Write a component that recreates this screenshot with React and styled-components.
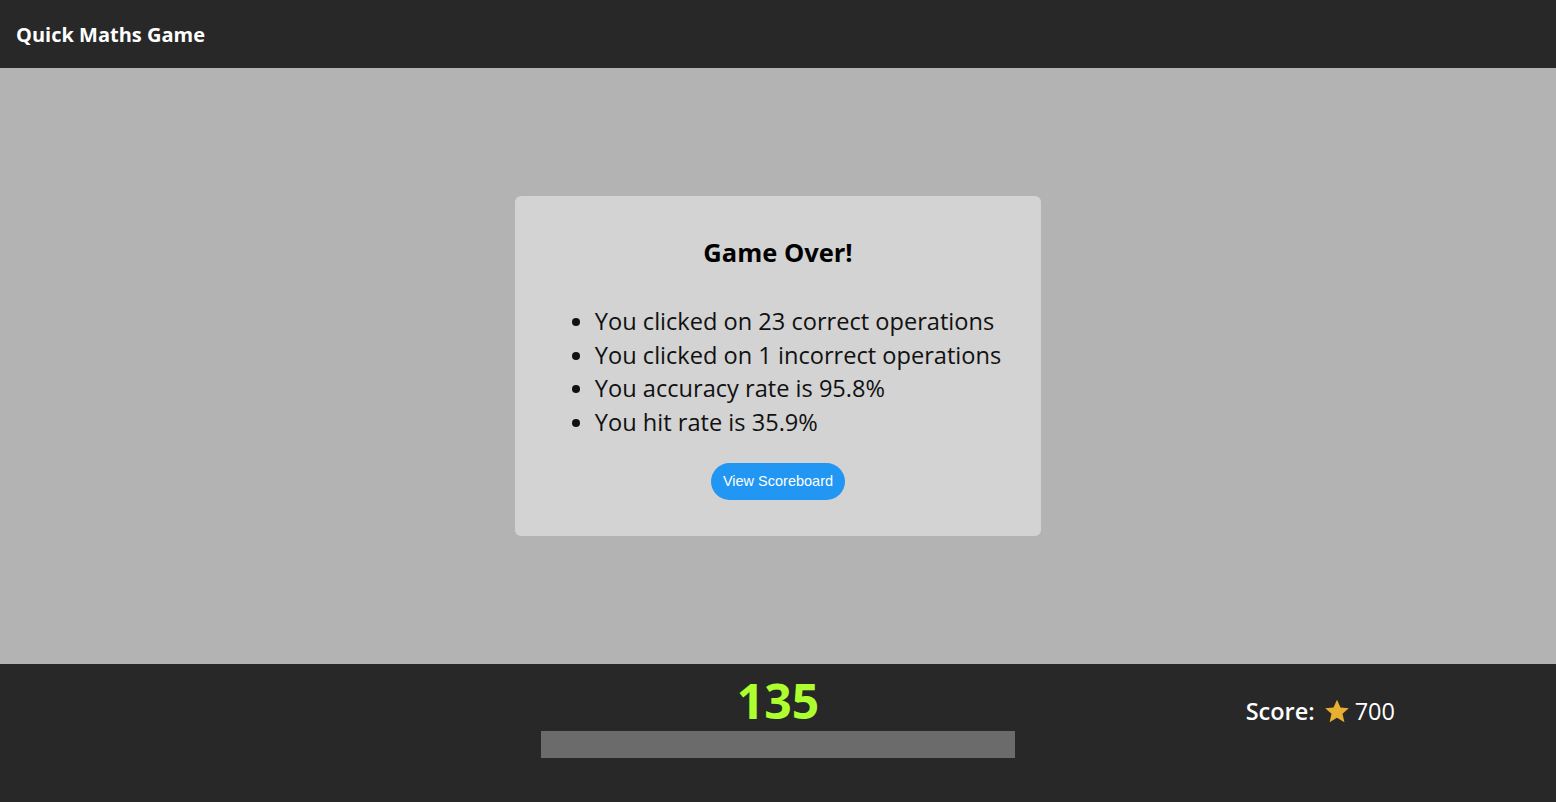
import React from "react";
import styled, { createGlobalStyle } from "styled-components";

const GlobalStyle = createGlobalStyle`
  html, body {
    margin: 0;
    padding: 0;
    height: 100%;
  }
  body {
    font-family: "Open Sans", "Noto Sans", sans-serif;
    background: #b3b3b3;
  }
  #root {
    height: 100%;
  }
`;

const stats = [
  "You clicked on 23 correct operations",
  "You clicked on 1 incorrect operations",
  "You accuracy rate is 95.8%",
  "You hit rate is 35.9%",
];

function StarIcon() {
  return (
    <svg width="28" height="27" viewBox="0 0 24 24">
      <path
        fill="#e8b030"
        d="M12 1.5l3.1 6.9 7.4.7-5.6 5 1.7 7.4L12 17.6l-6.6 3.9 1.7-7.4-5.6-5 7.4-.7z"
      />
    </svg>
  );
}

export default function App() {
  return (
    <Page>
      <GlobalStyle />
      <Header>
        <Title>Quick Maths Game</Title>
      </Header>

      <Main>
        <Card>
          <CardTitle>Game Over!</CardTitle>
          <StatList>
            {stats.map((s) => (
              <li key={s}>{s}</li>
            ))}
          </StatList>
          <ScoreboardButton>View Scoreboard</ScoreboardButton>
        </Card>
      </Main>

      <Footer>
        <div />
        <TimerBox>
          <Timer>135</Timer>
          <TimeBar />
        </TimerBox>
        <ScoreBox>
          <span>Score:</span>
          <StarIcon />
          <span>700</span>
        </ScoreBox>
      </Footer>
    </Page>
  );
}

const Page = styled.div`
  height: 802px;
  display: flex;
  flex-direction: column;
`;

const Header = styled.header`
  height: 68px;
  flex-shrink: 0;
  background: #282828;
  display: flex;
  align-items: center;
  padding: 0 16px;
  box-sizing: border-box;
`;

const Title = styled.h1`
  margin: 0;
  color: #fff;
  font-size: 20px;
  font-weight: 700;
`;

const Main = styled.main`
  flex: 1;
  background: #b3b3b3;
  display: flex;
  justify-content: center;
  padding-top: 128px;
  box-sizing: border-box;
`;

const Card = styled.div`
  width: 526px;
  height: 340px;
  box-sizing: border-box;
  background: #d3d3d3;
  border-radius: 6px;
  display: flex;
  flex-direction: column;
  align-items: center;
  padding-top: 40px;
`;

const CardTitle = styled.h2`
  margin: 0;
  font-size: 25.5px;
  font-weight: 700;
  color: #000;
  line-height: 32px;
`;

const StatList = styled.ul`
  margin: 37px 0 23px;
  padding-left: 40px;
  font-size: 23.6px;
  line-height: 33.7px;
  color: #111;
  li {
    padding-left: 0;
  }
  li::marker {
    font-size: 22px;
  }
`;

const ScoreboardButton = styled.button`
  width: 134px;
  height: 37px;
  border: none;
  border-radius: 19px;
  background: #2196f3;
  color: #fff;
  font-family: "Liberation Sans", Arial, sans-serif;
  font-size: 14.5px;
  cursor: pointer;
`;

const Footer = styled.footer`
  height: 138px;
  flex-shrink: 0;
  background: #282828;
  display: grid;
  grid-template-columns: 1fr 474px 1fr;
`;

const TimerBox = styled.div`
  display: flex;
  flex-direction: column;
  align-items: center;
  padding-top: 8px;
`;

const Timer = styled.div`
  color: #adff2f;
  font-size: 48px;
  font-weight: 700;
  line-height: 58px;
`;

const TimeBar = styled.div`
  width: 100%;
  height: 27px;
  margin-top: 1px;
  background: #6b6b6b;
`;

const ScoreBox = styled.div`
  display: flex;
  align-items: center;
  justify-content: flex-end;
  gap: 4px;
  padding-right: 161px;
  height: 94px;
  color: #fff;
  font-size: 23.5px;
  font-weight: 600;
  span:first-child {
    margin-right: 4px;
  }
  span:last-child {
    font-weight: 500;
  }
`;
